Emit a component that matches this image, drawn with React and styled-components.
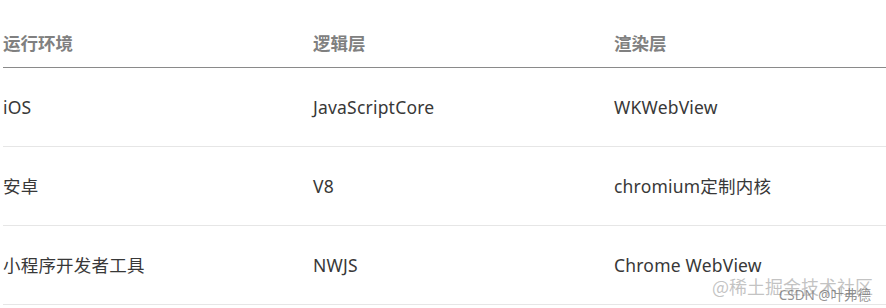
import React from "react";
import styled, { createGlobalStyle } from "styled-components";

const Global = createGlobalStyle`
  html, body { margin: 0; padding: 0; background: #fff; }
  body { font-family: "Noto Sans", "Noto Sans CJK SC", sans-serif; }
`;

const Page = styled.div`
  position: relative;
  width: 886px;
  height: 308px;
  padding-left: 3px;
  box-sizing: border-box;
  overflow: hidden;
`;

const Row = styled.div`
  display: grid;
  grid-template-columns: 310px 301px 1fr;
  height: ${(p) => (p.$head ? "67px" : "78px")};
  border-bottom: 1px solid ${(p) => (p.$head ? "#8a8a8a" : "#e6e6e6")};
  align-items: ${(p) => (p.$head ? "start" : "center")};
`;

const Cell = styled.div`
  font-size: 17.5px;
  line-height: 24px;
  color: ${(p) => (p.$head ? "#808080" : "#383838")};
  font-weight: ${(p) => (p.$head ? 700 : 400)};
  padding-top: ${(p) => (p.$head ? "31px" : "0")};
  letter-spacing: ${(p) => (p.$head ? "0" : "0.2px")};
  white-space: nowrap;
`;

const Watermark = styled.div`
  position: absolute;
  right: 13px;
  bottom: 13px;
  font-size: 18px;
  line-height: 18px;
  color: rgba(185, 185, 185, 0.85);
  font-family: "Noto Sans CJK SC", sans-serif;
`;

const Sub = styled.div`
  position: absolute;
  right: 15px;
  bottom: 5px;
  font-size: 13.5px;
  line-height: 16px;
  color: rgba(110, 110, 110, 0.75);
  font-family: "Noto Sans", "Noto Sans CJK SC", sans-serif;
`;

const head = ["运行环境", "逻辑层", "渲染层"];
const rows = [
  ["iOS", "JavaScriptCore", "WKWebView"],
  ["安卓", "V8", "chromium定制内核"],
  ["小程序开发者工具", "NWJS", "Chrome WebView"],
];

export default function App() {
  return (
    <>
      <Global />
      <Page>
        <Row $head>
          {head.map((h) => (
            <Cell $head key={h}>{h}</Cell>
          ))}
        </Row>
        {rows.map((r) => (
          <Row key={r[0]}>
            {r.map((c) => (
              <Cell key={c}>{c}</Cell>
            ))}
          </Row>
        ))}
        <Watermark>@稀土掘金技术社区</Watermark>
        <Sub>CSDN @叶弗德</Sub>
      </Page>
    </>
  );
}
